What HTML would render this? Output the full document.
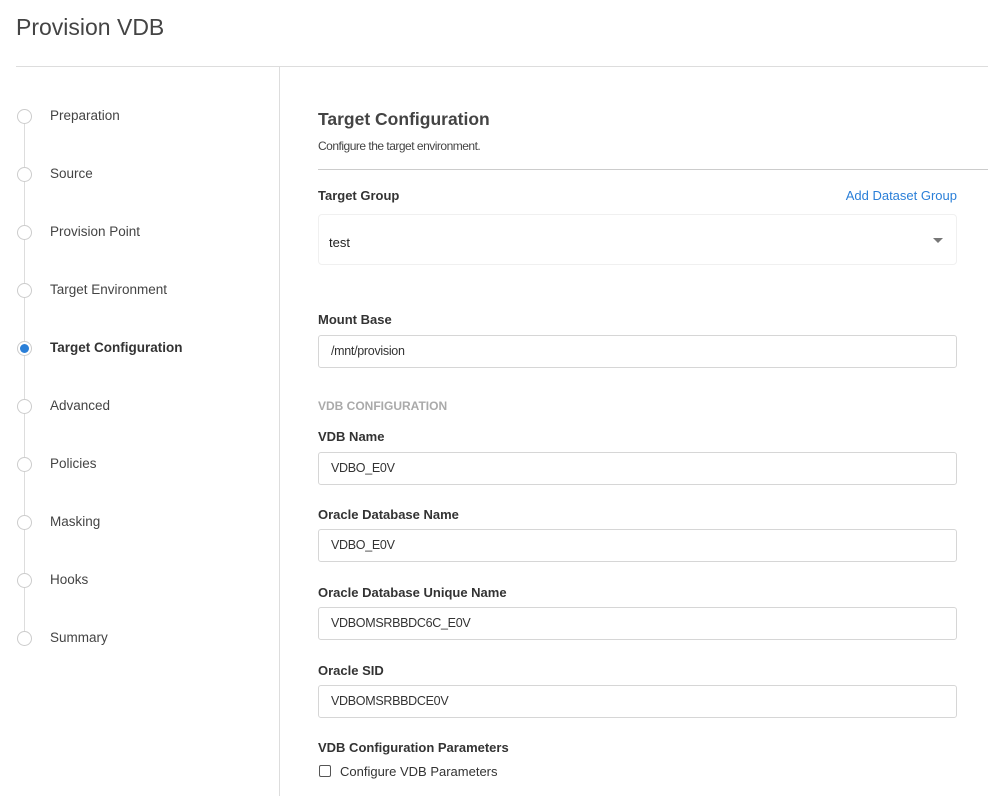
<!DOCTYPE html>
<html><head><style>
*{margin:0;padding:0;box-sizing:border-box}
body{width:988px;height:796px;background:#fff;font-family:"Liberation Sans",Arial,sans-serif;color:#333;position:relative;overflow:hidden}
.a{position:absolute}
h1{position:absolute;left:16px;top:14px;font-size:23px;font-weight:normal;color:#444}
.step{position:absolute;left:50px;font-size:13.5px;color:#444;line-height:16px}
.dot{position:absolute;left:17px;width:15px;height:15px;border:1px solid #ccc;border-radius:50%;background:#fff}
.lbl{position:absolute;left:318px;font-size:13px;font-weight:bold;color:#333}
.inp{position:absolute;left:318px;width:639px;height:33px;border:1px solid #d6d6d6;border-radius:3px;font-size:12.5px;letter-spacing:-0.3px;padding-left:12px;line-height:31px;color:#333}
</style></head><body>
<h1>Provision VDB</h1>
<div class="a" style="left:16px;top:66px;width:972px;height:1px;background:#ddd"></div>
<div class="a" style="left:279px;top:66px;width:1px;height:730px;background:#ddd"></div>
<div class="a" style="left:24px;top:116px;width:1px;height:522px;background:#ddd"></div>

<div class="dot" style="top:109px"></div><div class="step" style="top:108px">Preparation</div>
<div class="dot" style="top:167px"></div><div class="step" style="top:166px">Source</div>
<div class="dot" style="top:225px"></div><div class="step" style="top:224px">Provision Point</div>
<div class="dot" style="top:283px"></div><div class="step" style="top:282px">Target Environment</div>
<div class="dot" style="top:341px;border-color:#ccc"><div style="position:absolute;left:2px;top:2px;width:9px;height:9px;border-radius:50%;background:#2a7fd8"></div></div><div class="step" style="top:340px;font-weight:bold;color:#333">Target Configuration</div>
<div class="dot" style="top:399px"></div><div class="step" style="top:398px">Advanced</div>
<div class="dot" style="top:457px"></div><div class="step" style="top:456px">Policies</div>
<div class="dot" style="top:515px"></div><div class="step" style="top:514px">Masking</div>
<div class="dot" style="top:573px"></div><div class="step" style="top:572px">Hooks</div>
<div class="dot" style="top:631px"></div><div class="step" style="top:630px">Summary</div>

<div class="a" style="left:318px;top:109px;font-size:17.5px;font-weight:bold;color:#444">Target Configuration</div>
<div class="a" style="left:318px;top:139px;font-size:12px;letter-spacing:-0.5px;color:#444">Configure the target environment.</div>
<div class="a" style="left:318px;top:169px;width:670px;height:1px;background:#ccc"></div>

<div class="lbl" style="top:188px">Target Group</div>
<div class="a" style="right:31px;top:188px;font-size:13px;color:#2a7fd8">Add Dataset Group</div>
<div class="a" style="left:318px;top:214px;width:639px;height:51px;border:1px solid #f0f0f0;border-radius:4px"></div>
<div class="a" style="left:329px;top:235px;font-size:13px;color:#222">test</div>
<div class="a" style="left:933px;top:238px;width:0;height:0;border-left:5px solid transparent;border-right:5px solid transparent;border-top:5px solid #777"></div>

<div class="lbl" style="top:312px">Mount Base</div>
<div class="inp" style="top:335px">/mnt/provision</div>

<div class="a" style="left:318px;top:399px;font-size:12px;font-weight:bold;color:#aaa">VDB CONFIGURATION</div>
<div class="lbl" style="top:429px">VDB Name</div>
<div class="inp" style="top:452px">VDBO_E0V</div>
<div class="lbl" style="top:507px">Oracle Database Name</div>
<div class="inp" style="top:529px">VDBO_E0V</div>
<div class="lbl" style="top:585px">Oracle Database Unique Name</div>
<div class="inp" style="top:607px">VDBOMSRBBDC6C_E0V</div>
<div class="lbl" style="top:663px">Oracle SID</div>
<div class="inp" style="top:685px">VDBOMSRBBDCE0V</div>
<div class="lbl" style="top:740px">VDB Configuration Parameters</div>
<div class="a" style="left:319px;top:765px;width:12px;height:12px;border:1px solid #555;border-radius:2px"></div>
<div class="a" style="left:340px;top:764px;font-size:13px;color:#333">Configure VDB Parameters</div>
</body></html>
